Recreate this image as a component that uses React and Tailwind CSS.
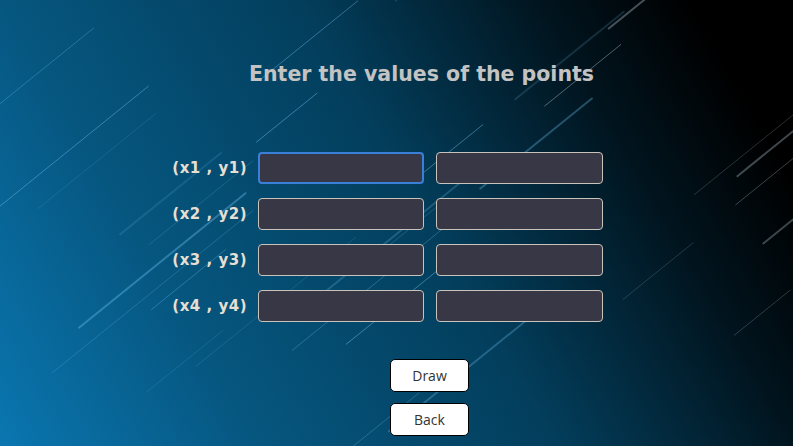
import React from 'react'

// diagonal streaks across the background
const streaks = (() => {
  let s = 7
  const rnd = () => {
    s = (s * 9301 + 49297) % 233280
    return s / 233280
  }
  const out = []
  for (let i = 0; i < 42; i++) {
    const x = rnd() * 900 - 60
    const y = rnd() * 520 - 40
    const len = 60 + rnd() * 220
    const op = 0.15 + rnd() * 0.35
    const w = rnd() > 0.78 ? 2 : 1
    out.push({ x, y, len, op, w })
  }
  return out
})()

const Streaks = () => (
  <svg className="absolute inset-0 w-full h-full pointer-events-none" viewBox="0 0 793 446" preserveAspectRatio="none">
    {streaks.map((l, i) => (
      <line
        key={i}
        x1={l.x}
        y1={l.y}
        x2={l.x + l.len * 0.78}
        y2={l.y - l.len * 0.63}
        stroke={l.x > 520 ? '#9fb4c0' : '#6fc0f0'}
        strokeOpacity={l.op}
        strokeWidth={l.w}
        strokeLinecap="round"
      />
    ))}
  </svg>
)

const rows = ['(x1 , y1)', '(x2 , y2)', '(x3 , y3)', '(x4 , y4)']

export default function App() {
  return (
    <div className="relative w-[793px] h-[446px] overflow-hidden bg-[linear-gradient(60deg,#0a76b0_0%,#06567f_25%,#033e5c_53%,#01141e_76%,#000_90%)]">
      <Streaks />
      <div className="relative flex flex-col">
        <h1
          className="mt-[60px] ml-[249px] text-[20.5px] leading-[28px] font-bold text-[#c3c3c3]"
          style={{ fontFamily: '"DejaVu Sans", Verdana, sans-serif' }}
        >
          Enter the values of the points
        </h1>

        <div className="mt-[64px] ml-[170px] flex flex-col gap-[14px]">
          {rows.map((r, i) => (
            <div key={r} className="flex items-center">
              <span
                className="w-[88px] pr-[11px] text-right text-[15px] font-bold tracking-[0.5px] text-[#e6dfd2]"
                style={{ fontFamily: '"DejaVu Sans", Verdana, sans-serif' }}
              >
                {r}
              </span>
              <input
                className={
                  i === 0
                    ? 'w-[166px] h-[32px] rounded-[4px] bg-[#373745] border-2 border-[#3a7fd8] outline-none'
                    : 'w-[166px] h-[32px] rounded-[4px] bg-[#373745] border border-[#c8c4bc] outline-none'
                }
              />
              <input className="ml-[12px] w-[167px] h-[32px] rounded-[4px] bg-[#373745] border border-[#c8c4bc] outline-none" />
            </div>
          ))}
        </div>

        <div
          className="mt-[37px] ml-[390px] flex flex-col gap-[11px]"
          style={{ fontFamily: '"Open Sans", "Noto Sans", sans-serif' }}
        >
          <button className="w-[79px] h-[33px] bg-white border border-black rounded-[5px] text-[14px] text-[#333]">Draw</button>
          <button className="w-[79px] h-[33px] bg-white border border-black rounded-[5px] text-[14px] text-[#333]">Back</button>
        </div>
      </div>
    </div>
  )
}
